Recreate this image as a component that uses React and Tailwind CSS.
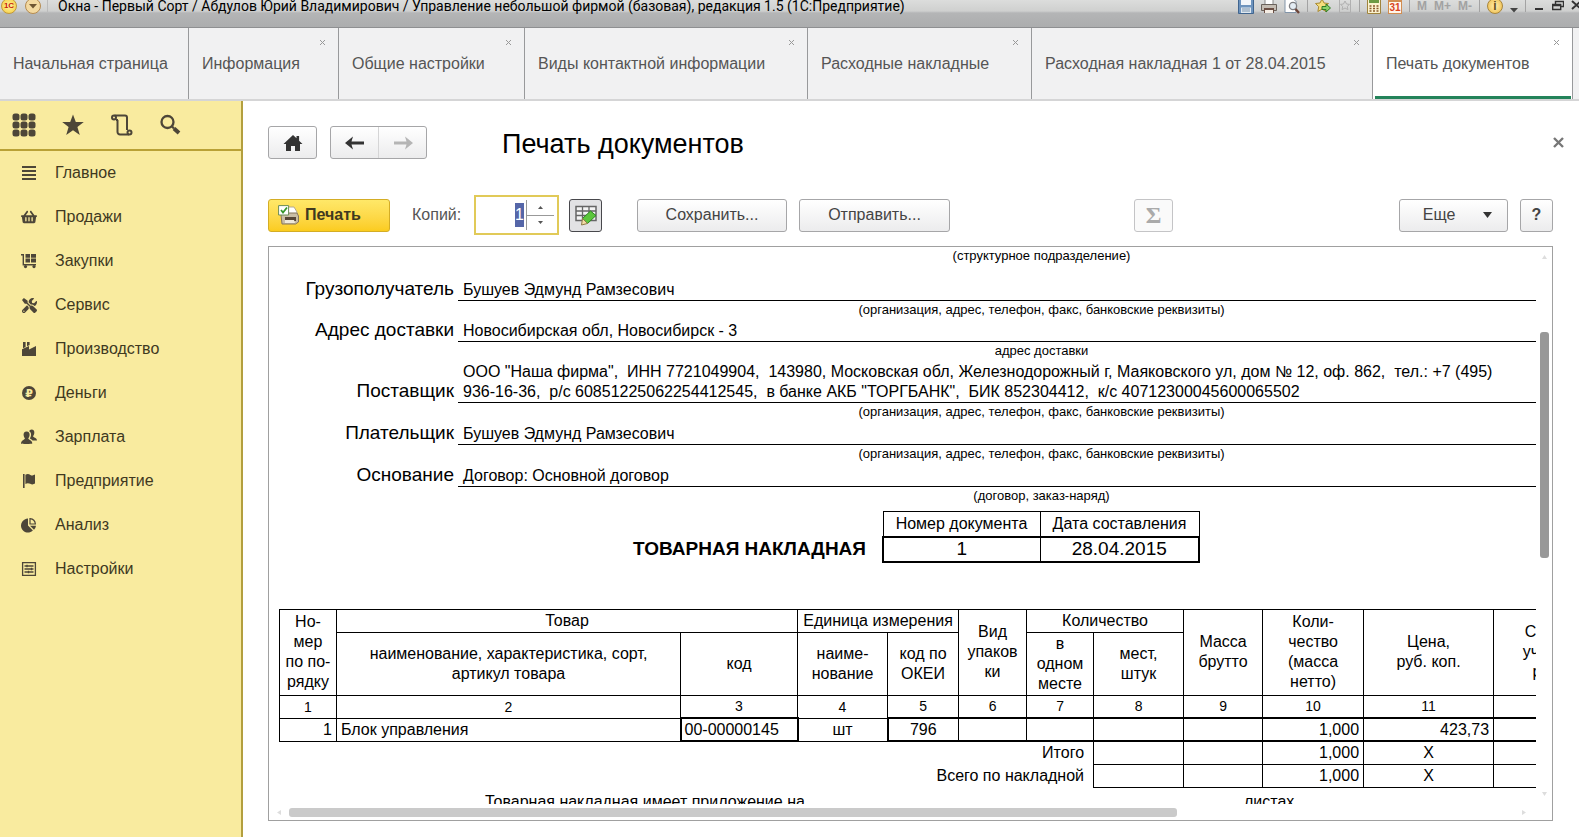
import React, { useEffect, useRef } from 'react';
import { FaShoppingBasket, FaTools } from 'react-icons/fa';

const tabs = [
  { title: 'Начальная страница', width: 'w-[189px]', fixed: true },
  { title: 'Информация', width: 'w-[150px]' },
  { title: 'Общие настройки', width: 'w-[186px]' },
  { title: 'Виды контактной информации', width: 'w-[283px]' },
  { title: 'Расходные накладные', width: 'w-[224px]' },
  { title: 'Расходная накладная 1 от 28.04.2015', width: 'w-[341px]' },
  { title: 'Печать документов', width: 'w-[200px]', active: true },
];

const CartIcon = () => (
  <svg className="w-4 h-4" viewBox="0 0 16 16" fill="currentColor">
    <path d="M0 1h3v10h12v1.5H1.6V2.4H0z" />
    <path d="M4.5 1h4.5v3.7H4.5zM10 1h5v3.7h-5zM4.5 5.6h4.5v4H4.5zM10 5.6h5v4h-5z" />
    <circle cx="4.5" cy="13.6" r="1.6" />
    <circle cx="13" cy="13.6" r="1.6" />
  </svg>
);

const FactoryIcon = () => (
  <svg className="w-4 h-4" viewBox="0 0 16 16" fill="currentColor">
    <path d="M1 15V8.2L8 5v3.6L15 5v10z" />
    <path d="M2 1h2.6v5L2 7.2zM6 1h2.6v3L6 5.2z" />
  </svg>
);

const ListIcon = () => (
  <svg className="w-4 h-4" viewBox="0 0 16 16" fill="currentColor">
    <path d="M1 1h14v2H1zM1 5h14v2H1zM1 9h14v2H1zM1 13h14v2H1z" />
  </svg>
);

const PeopleIcon = () => (
  <svg className="w-4 h-4" viewBox="0 0 16 16" fill="currentColor">
    <path d="M10.500.5c2.200 0 3 1.500 2.800 3.500-.1 1.500-.8 2.500-1.200 3.200 0 1.200 3.900 1.500 3.900 4.300h-4.500c-.8-1-2-1.600-2.700-2 1-1.400 1.700-3.500 1-5.400-.3-.8-.9-1.400-1.600-1.800.4-1.100 1.200-1.800 2.300-1.800z" />
    <path d="M5.600 2.500c2.200 0 3.200 1.500 3 3.600C8.500 7.700 7.800 8.700 7.300 9.400c0 1.300 4 1.700 4 5.100 0 .6-11.300.6-11.300 0 0-3.400 3.900-3.800 3.900-5.100-.5-.7-1.200-1.700-1.300-3.300-.2-2.100.8-3.600 3-3.600z" />
  </svg>
);

const FlagIcon = () => (
  <svg className="w-4 h-4" viewBox="0 0 16 16" fill="currentColor">
    <path d="M2 1h1.600v14H2z" />
    <path d="M4.400 1.800C6.500.6 8 1.200 9.400 1.900c1.600.8 3 .7 4.600-.3v9c-1.600 1-3.200 1-4.800.2-1.600-.7-3-.9-4.800.2z" />
  </svg>
);

const ChartIcon = () => (
  <svg className="w-4 h-4" viewBox="0 0 16 16" fill="currentColor">
    <path d="M7 1.600V8.600l4.900 5A7 7 0 1 1 7 1.600z" />
    <path d="M9 1.600A6 6 0 0 1 14.400 7H9z" fill="none" stroke="currentColor" strokeWidth="1.200" />
    <path d="M9 8.800h6a7 7 0 0 1-2 4z" />
  </svg>
);

const SettingsIcon = () => (
  <svg className="w-4 h-4" viewBox="0 0 16 16" fill="none" stroke="currentColor" strokeWidth="1.3">
    <path d="M1.6 1.6h12.8v12.8H1.6z" />
    <path d="M3.5 5h9M3.5 8h9M3.5 11h9M6 3.8v2.4M10.5 6.8v2.4M7.5 9.8v2.4" />
  </svg>
);

const RubleIcon = () => (
  <span className="flex h-[14px] w-[14px] items-center justify-center rounded-full bg-[#4d4638] text-[11px] leading-none font-bold text-[#f9eb9f] font-['DejaVu_Sans',sans-serif]">
    ₽
  </span>
);

const sections = [
  { title: 'Главное', icon: <ListIcon /> },
  { title: 'Продажи', icon: <FaShoppingBasket size={16} /> },
  { title: 'Закупки', icon: <CartIcon /> },
  { title: 'Сервис', icon: <FaTools size={15} /> },
  { title: 'Производство', icon: <FactoryIcon /> },
  { title: 'Деньги', icon: <RubleIcon /> },
  { title: 'Зарплата', icon: <PeopleIcon /> },
  { title: 'Предприятие', icon: <FlagIcon /> },
  { title: 'Анализ', icon: <ChartIcon /> },
  { title: 'Настройки', icon: <SettingsIcon /> },
];

const Separator = () => <span className="h-3 w-px shrink-0 bg-[#a3a3a3]" />;

const TitleBar = () => (
  <header className="h-7 shrink-0 overflow-hidden border-b border-[#8e8f91] bg-[linear-gradient(to_bottom,#dcdddc_0px,#cfd0cf_11px,#b4b5b6_13px,#acadae_27px)]">
    <div className="flex h-3 items-center">
      <button aria-label="Меню программы" className="ml-px flex h-4 w-4 shrink-0 items-center justify-center rounded-full border border-[#c29a3c] bg-[radial-gradient(#fff6a0,#f5c735)] text-[8px] font-bold leading-none text-[#c8200c]">
        1С
      </button>
      <button aria-label="Настройка панели" className="ml-2 flex h-4 w-4 shrink-0 items-center justify-center rounded-full border border-[#b58b50] bg-[#f3d9a0]">
        <svg className="h-2 w-2" viewBox="0 0 8 8" fill="#6f5632"><path d="M0 2h8L4 6.5z" /></svg>
      </button>
      <span className="ml-1.5 h-3 w-px bg-[#bbb]" />
      <h1 className="ml-2.5 whitespace-nowrap text-sm leading-3 text-black font-[Roboto,sans-serif]">
        Окна - Первый Сорт / Абдулов Юрий Владимирович / Управление небольшой фирмой (базовая), редакция 1.5 (1С:Предприятие)
      </h1>

      <div className="ml-auto flex shrink-0 items-center gap-[7px]">
        <button aria-label="Сохранить">
          <svg className="h-4 w-4" viewBox="0 0 16 16">
            <path d="M.5.5h15v15H.5z" fill="#6d93bd" stroke="#40658f" />
            <path d="M3 1h10v6H3z" fill="#f2f6fa" />
            <path d="M3 9.500h10V15H3z" fill="#dfe8f0" />
            <path d="M4 11h8M4 13h8" stroke="#7c95ae" />
          </svg>
        </button>
        <button aria-label="Печать">
          <svg className="h-4 w-4" viewBox="0 0 16 16">
            <path d="M4 1h8v6H4z" fill="#fff" stroke="#888" />
            <path d="M.5 6.500h15v6H.5z" fill="#c5bdb3" stroke="#6a625b" />
            <path d="M3 10h10v5H3z" fill="#6b4e43" />
            <path d="M4 12h8v3H4z" fill="#f5ede4" />
          </svg>
        </button>
        <button aria-label="Предварительный просмотр">
          <svg className="h-4 w-4" viewBox="0 0 16 16" fill="none">
            <path d="M1 .5h8l3 3v11H1z" fill="#fff" stroke="#8194a8" />
            <circle cx="9" cy="8" r="3.600" fill="#e4edf4" stroke="#7e7f83" strokeWidth="1.300" />
            <path d="M11.500 11l3.500 4" stroke="#6d4438" strokeWidth="2.400" />
          </svg>
        </button>
        <Separator />
        <button aria-label="Добавить в избранное">
          <svg className="h-4 w-4" viewBox="0 0 16 16">
            <path d="M7 1l2 4 4.500.5-3.200 3.200.8 4.800L7 11.200 2.900 13.500l.8-4.800L.5 5.500 5 5z" fill="#f5dd7b" stroke="#a98a32" />
            <path d="M7 8.500h4V6l4.500 4-4.500 4v-2.500H7z" fill="#8bd16a" stroke="#2f7c25" />
          </svg>
        </button>
        <button aria-label="Избранное" disabled>
          <svg className="h-4 w-[14px]" viewBox="1 0 14 16" fill="none" stroke="#b0b0b0">
            <path d="M2.500.5h11v14h-11z" />
            <path d="M8 3l1.500 3 3 .4-2.200 2 .6 3.200L8 10l-2.900 1.600.6-3.200-2.200-2 3-.4z" />
          </svg>
        </button>
        <Separator />
        <button aria-label="Калькулятор">
          <svg className="h-4 w-[14px]" viewBox="0 0 14 16">
            <path d="M.5.5h13v15H.5z" fill="#fbf3cf" stroke="#a0843d" />
            <path d="M2 2h10v3H2z" fill="#6d9b45" />
            <path d="M2.500 8h9M2.500 10.500h9M2.500 13h9" stroke="#8a5a2c" strokeWidth="1.500" strokeDasharray="2 1.500" />
          </svg>
        </button>
        <button aria-label="Календарь" className="flex h-4 w-[14px] items-end justify-center border border-[#d28d51] border-t-4 bg-[#fff6ea] text-[10px] font-bold leading-[11px] text-[#d9431e]">
          31
        </button>
        <Separator />
        <button disabled className="text-xs font-bold leading-3 text-[#a2a2a2]">M</button>
        <button disabled className="text-xs font-bold leading-3 text-[#a2a2a2]">M+</button>
        <button disabled className="text-xs font-bold leading-3 text-[#a2a2a2]">M-</button>
        <Separator />
        <button aria-label="О программе" className="flex h-4 w-4 items-center justify-center rounded-full border border-[#a9863c] bg-[radial-gradient(#ffeeb0,#edb942)] text-xs font-bold leading-none text-[#604b1c]">
          i
        </button>
        <button aria-label="Ещё">
          <svg className="h-[5px] w-2 mt-2" viewBox="0 0 8 5" fill="#444"><path d="M0 0h8L4 4.500z" /></svg>
        </button>
        <Separator />
        <button aria-label="Свернуть">
          <svg className="h-4 w-3" viewBox="0 0 12 16" fill="#333"><path d="M2 10h8v2H2z" /></svg>
        </button>
        <button aria-label="Восстановить">
          <svg className="h-4 w-3" viewBox="0 0 12 16" fill="none" stroke="#333" strokeWidth="1.400">
            <path d="M3.500 6V3.500h8v5H9M.7 6.500h8v5h-8zM.7 7.500h8" />
          </svg>
        </button>
        <button aria-label="Закрыть" className="w-[8px] overflow-hidden">
          <svg className="h-4 w-3" viewBox="0 0 12 16" fill="none" stroke="#333" strokeWidth="2">
            <path d="M1 3l9 8M10 3l-9 8" />
          </svg>
        </button>
      </div>
    </div>
  </header>
);

const TabBar = () => (
  <nav className="flex h-[73px] shrink-0 border-b-2 border-[#d5d5d6] bg-[#f1f1f2]">
    {tabs.map((tab) => (
      <div
        key={tab.title}
        className={`relative flex shrink-0 border-r border-[#98999b] ${tab.width} ${tab.active ? 'bg-white' : ''}`}
      >
        <button className="flex-1 whitespace-nowrap pl-[13px] text-left text-base text-[#555]">{tab.title}</button>
        {!tab.fixed && (
          <button aria-label="Закрыть вкладку" className="absolute right-[13px] top-3 text-[#999]">
            <svg className="h-[5px] w-[5px]" viewBox="0 0 5 5" stroke="currentColor"><path d="M0 0l5 5M5 0L0 5" /></svg>
          </button>
        )}
        {tab.active && <span className="absolute left-0.5 right-px bottom-0 h-[3px] bg-[#24835a]" />}
      </div>
    ))}
  </nav>
);

const Sidebar = () => (
  <aside className="w-[243px] shrink-0 border-r-2 border-[#b39f3e] bg-[#f9eb9f] text-[#4d4638]">
    <div className="flex h-[50px] items-center border-b-2 border-[#b9a136] pl-3">
      <button aria-label="Все разделы">
        <svg className="h-6 w-6" viewBox="0 0 24 24" fill="currentColor">
          {[4, 12, 20].map((y) => [4, 12, 20].map((x) => (
            <rect key={`${x}-${y}`} x={x - 3.5} y={y - 3.5} width="7" height="7" rx="2.5" />
          )))}
        </svg>
      </button>
      <button aria-label="Избранное" className="ml-[25px]">
        <svg className="h-6 w-6" viewBox="0 0 24 24" fill="currentColor">
          <path d="M12 1.500l2.800 7.500h8l-6.400 5 2.400 8L12 17.300 5.200 22l2.400-8-6.400-5h8z" />
        </svg>
      </button>
      <button aria-label="История" className="ml-[25px]">
        <svg className="h-6 w-6" viewBox="0 0 24 24" fill="none" stroke="currentColor" strokeWidth="2">
          <path d="M4.500 2.500H15a2 2 0 0 1 2 2v12.500M7.500 7v12a2.500 2.500 0 0 0 2.500 2.500h9" />
          <circle cx="4" cy="4.500" r="2" />
          <path d="M6 7h2" />
          <circle cx="19.500" cy="19.500" r="2" />
        </svg>
      </button>
      <button aria-label="Поиск" className="ml-6">
        <svg className="h-6 w-6" viewBox="0 0 24 24" fill="none" stroke="currentColor">
          <circle cx="9.500" cy="9" r="6" strokeWidth="2.300" />
          <path d="M14 13.500l2 2" strokeWidth="2.300" />
          <path d="M16 15.500l5 4.500" strokeWidth="4" />
        </svg>
      </button>
    </div>
    <ul>
      {sections.map((section) => (
        <li key={section.title}>
          <a href="#" className="flex h-11 items-center pl-[21px] text-base text-[#40391f]">
            <span className="flex w-4 justify-center text-[#4d4638]">{section.icon}</span>
            <span className="ml-[18px]">{section.title}</span>
          </a>
        </li>
      ))}
    </ul>
  </aside>
);

const buttonStyle = 'flex h-[33px] items-center justify-center rounded-[3px] border border-[#a6a6a8] bg-linear-to-b from-white to-[#ececed] text-base text-[#444]';

const Toolbar = () => {
  const copies = useRef(null);

  useEffect(() => {
    copies.current.focus();
    copies.current.select();
  }, []);

  return (
    <div className="mt-9 flex h-10 items-center">
      <button className="flex h-[33px] w-[122px] shrink-0 items-center gap-1.5 rounded-[3px] border border-[#d4ad25] bg-linear-to-b from-[#ffe868] to-[#fbcc1d] pl-[9px] text-base font-bold text-[#40391f]">
        <svg className="h-5 w-[21px]" viewBox="0 0 21 20">
          <path d="M7 2h9l3 5v3H7z" fill="#fff" stroke="#b4a98c" />
          <path d="M3 10l3-2h13l1.500 3v6l-3 2H4z" fill="#c9bda5" stroke="#85765d" />
          <path d="M7 12h11v4H7z" fill="#564636" />
          <path d="M7 15h9l1 3H7z" fill="#efe9da" />
          <path d="M.6.600h10v9.400H.6z" fill="#fff" stroke="#6a8c56" />
          <path d="M3 5l2 2.500L9 2.500" fill="none" stroke="#35962b" strokeWidth="1.800" />
        </svg>
        Печать
      </button>
      <label htmlFor="copies" className="ml-[22px] w-[62px] text-base text-[#555]">Копий:</label>
      <div className="flex h-10 w-[85px] shrink-0 border-2 border-[#e1ca58] bg-white py-[3px] pr-[3px]">
        <input
          id="copies"
          ref={copies}
          defaultValue="1"
          className="w-[51px] border-r border-[#999] pr-[2px] text-right text-base text-black outline-none selection:bg-[#5566a8] selection:text-white"
        />
        <div className="flex flex-1 flex-col">
          <button aria-label="Больше" className="flex flex-1 items-center justify-center border-b border-[#999]">
            <svg className="h-[3px] w-[5px]" viewBox="0 0 5 3" fill="#555"><path d="M0 3h5L2.500 0z" /></svg>
          </button>
          <button aria-label="Меньше" className="flex flex-1 items-center justify-center">
            <svg className="h-[3px] w-[5px]" viewBox="0 0 5 3" fill="#555"><path d="M0 0h5L2.500 3z" /></svg>
          </button>
        </div>
      </div>
      <button aria-label="Редактирование" className="ml-2.5 flex h-[33px] w-[33px] shrink-0 items-center justify-center rounded-[3px] border border-[#48484c] bg-[#e2e2e4]">
        <svg className="h-[21px] w-[22px]" viewBox="0 0 22 21">
          <path d="M1 1.500h20v14H1z" fill="#f4f4f4" stroke="#666" strokeWidth="1.500" />
          <path d="M1 6h20M1 10.500h20M7.500 1.500v14M14 1.500v14" stroke="#666" strokeWidth="1.300" />
          <path d="M7.500 13.500l8-7.500 5.500 4.500-8.500 8z" fill="#5cc63c" stroke="#2c8420" />
          <path d="M7.500 13.500l-1 6.500 6-1.500z" fill="#f2dca5" stroke="#8f7b49" />
        </svg>
      </button>
      <button className={`${buttonStyle} ml-[35px] w-[150px]`}>Сохранить...</button>
      <button className={`${buttonStyle} ml-3 w-[151px]`}>Отправить...</button>
      <button aria-label="Сумма" disabled className="ml-[184px] flex h-[33px] w-[39px] items-center justify-center rounded-[3px] border border-[#c4c4c6] bg-[#fafafa] text-2xl font-bold leading-none text-[#aaa] font-['Liberation_Serif',serif]">
        Σ
      </button>
      <button className={`${buttonStyle} ml-auto w-[109px] gap-7 pl-2`}>
        Еще
        <svg className="h-[6px] w-[9px]" viewBox="0 0 9 6" fill="#333"><path d="M0 0h9L4.500 6z" /></svg>
      </button>
      <button aria-label="Справка" className={`${buttonStyle} ml-3 w-[33px] font-bold`}>?</button>
    </div>
  );
};

const Field = ({ label, children, height = 'h-[25px]' }) => (
  <div className={`flex items-end ${height}`}>
    <div className="w-[179px] shrink-0 whitespace-nowrap pr-1 pb-px text-right text-[19px] leading-[22px]">{label}</div>
    <div className="flex-1 self-stretch border-b border-black flex items-end pl-[5px] text-base leading-5">
      <div className="whitespace-pre">{children}</div>
    </div>
  </div>
);

const Caption = ({ children }) => (
  <div className="ml-[179px] h-[17px] text-center text-[13px] leading-[17px]">{children}</div>
);

const cell = 'border border-black p-0 font-normal';
const strong = 'border-2 border-black p-0';
const requisites = '(организация, адрес, телефон, факс, банковские реквизиты)';

const GoodsTable = () => (
  <table className="mt-[46px] w-[1357px] table-fixed border-collapse text-center text-base leading-5">
    <colgroup>
      <col className="w-[57px]" />
      <col className="w-[344px]" />
      <col className="w-[117px]" />
      <col className="w-[90px]" />
      <col className="w-[71px]" />
      <col className="w-[68px]" />
      <col className="w-[67px]" />
      <col className="w-[90px]" />
      <col className="w-[79px]" />
      <col className="w-[101px]" />
      <col className="w-[130px]" />
      <col />
    </colgroup>
    <thead>
      <tr className="h-[23px]">
        <th rowSpan={2} className={cell}>Но-<br />мер<br />по по-<br />рядку</th>
        <th colSpan={2} className={cell}>Товар</th>
        <th colSpan={2} className={`${cell} whitespace-nowrap`}>Единица измерения</th>
        <th rowSpan={2} className={cell}>Вид<br />упаков<br />ки</th>
        <th colSpan={2} className={cell}>Количество</th>
        <th rowSpan={2} className={cell}>Масса<br />брутто</th>
        <th rowSpan={2} className={cell}>Коли-<br />чество<br />(масса<br />нетто)</th>
        <th rowSpan={2} className={cell}>Цена,<br />руб. коп.</th>
        <th rowSpan={2} className={cell}>Сумма без<br />учета НДС,<br />руб. коп.</th>
      </tr>
      <tr className="h-[63px]">
        <th className={cell}>наименование, характеристика, сорт,<br />артикул товара</th>
        <th className={cell}>код</th>
        <th className={cell}>наиме-<br />нование</th>
        <th className={cell}>код по<br />ОКЕИ</th>
        <th className={cell}>в<br />одном<br />месте</th>
        <th className={cell}>мест,<br />штук</th>
      </tr>
      <tr className="h-[23px] text-sm">
        {[1, 2, 3, 4, 5, 6, 7, 8, 9, 10, 11, 12].map((n) => (
          <th key={n} className={cell}>{n}</th>
        ))}
      </tr>
    </thead>
    <tbody>
      <tr className="h-[23px]">
        <td className={`${cell} pr-1 text-right`}>1</td>
        <td className={`${cell} pl-1 text-left`}>Блок управления</td>
        <td className={`${strong} pl-[3px] text-left`}>00-00000145</td>
        <td className={cell}>шт</td>
        <td className={`${strong} border-r`}>796</td>
        <td className={`${strong} border-x`}></td>
        <td className={`${strong} border-x`}></td>
        <td className={`${strong} border-x`}></td>
        <td className={`${strong} border-x`}></td>
        <td className={`${strong} border-x pr-1 text-right`}>1,000</td>
        <td className={`${strong} border-x pr-1 text-right`}>423,73</td>
        <td className={`${strong} border-x`}></td>
      </tr>
      {['Итого', 'Всего по накладной'].map((total) => (
        <tr key={total} className="h-[23px]">
          <td colSpan={7} className="p-0 pr-[9px] text-right">{total}</td>
          <td className={cell}></td>
          <td className={cell}></td>
          <td className={`${cell} pr-1 text-right`}>1,000</td>
          <td className={cell}>Х</td>
          <td className={cell}></td>
        </tr>
      ))}
    </tbody>
  </table>
);

const Sheet = () => (
  <div className="w-[1356px] pl-2.5 text-black">
    <Caption>(структурное подразделение)</Caption>
    <Field label="Грузополучатель" height="h-[37px]">Бушуев Эдмунд Рамзесович</Field>
    <Caption>{requisites}</Caption>
    <Field label="Адрес доставки" height="h-6">Новосибирская обл, Новосибирск - 3</Field>
    <Caption>адрес доставки</Caption>
    <Field label="Поставщик" height="h-11">
      {'ООО "Наша фирма",  ИНН 7721049904,  143980, Московская обл, Железнодорожный г, Маяковского ул, дом № 12, оф. 862,  тел.: +7 (495)\n936-16-36,  р/с 60851225062254412545,  в банке АКБ "ТОРГБАНК",  БИК 852304412,  к/с 40712300045600065502'}
    </Field>
    <Caption>{requisites}</Caption>
    <Field label="Плательщик">Бушуев Эдмунд Рамзесович</Field>
    <Caption>{requisites}</Caption>
    <Field label="Основание">Договор: Основной договор</Field>
    <Caption>(договор, заказ-наряд)</Caption>

    <div className="mt-[7px] flex items-end">
      <h3 className="w-[603px] pr-4 pb-[2px] text-right text-[19px] font-bold leading-6">ТОВАРНАЯ НАКЛАДНАЯ</h3>
      <table className="w-[318px] table-fixed border-collapse text-center text-base leading-5">
        <thead>
          <tr className="h-[25px]">
            <th className={`${cell} w-[157px]`}>Номер документа</th>
            <th className={cell}>Дата составления</th>
          </tr>
        </thead>
        <tbody>
          <tr className="h-[25px] text-[19px]">
            <td className={`${strong} border-r`}>1</td>
            <td className={`${strong} border-l`}>28.04.2015</td>
          </tr>
        </tbody>
      </table>
    </div>

    <GoodsTable />

    <div className="mt-1 flex pl-[206px] text-base leading-5">
      <p className="w-[759px]">Товарная накладная имеет приложение на</p>
      <p>листах</p>
    </div>
  </div>
);

const DocumentView = () => (
  <section className="mt-[11px] flex min-h-0 flex-1 flex-col border border-[#a0a0a0] bg-white">
    <div className="flex min-h-0 flex-1">
      <div className="min-w-0 flex-1 overflow-hidden">
        <Sheet />
      </div>
      <div className="flex w-4 flex-col items-center py-2">
        <svg className="h-1 w-[5px]" viewBox="0 0 5 4" fill="#ddd"><path d="M0 4h5L2.500 0z" /></svg>
        <div className="flex w-[9px] flex-1 flex-col">
          <div className="flex-[73]" />
          <div className="flex-[226] rounded-[3px] bg-[#989898]" />
          <div className="flex-[234]" />
        </div>
        <svg className="h-1 w-[5px]" viewBox="0 0 5 4" fill="#ddd"><path d="M0 0h5L2.500 4z" /></svg>
      </div>
    </div>
    <div className="flex h-4 items-center pl-2 pr-[26px]">
      <svg className="h-[5px] w-1" viewBox="0 0 4 5" fill="#ddd"><path d="M4 0v5L0 2.500z" /></svg>
      <div className="flex h-[9px] flex-1 pl-2">
        <div className="flex-[889] rounded-[3px] bg-[#cacaca]" />
        <div className="flex-[345]" />
      </div>
      <svg className="h-[5px] w-1" viewBox="0 0 4 5" fill="#ddd"><path d="M0 0v5l4-2.500z" /></svg>
    </div>
  </section>
);

const App = () => {
  return (
    <div className="flex h-screen flex-col overflow-hidden bg-white font-['Liberation_Sans',Arial,sans-serif]">
      <TitleBar />
      <TabBar />
      <div className="flex min-h-0 flex-1">
        <Sidebar />
        <main className="flex min-w-0 flex-1 flex-col pl-[25px] pr-[26px] pt-[25px] pb-4">
          <div className="flex h-[33px] items-center">
            <button aria-label="Домой" className={`${buttonStyle} w-[49px]`}>
              <svg className="h-[18px] w-5" viewBox="0 0 20 18" fill="#333">
                <path d="M10 1l3.500 3.200V2h2.600v4.700L19.500 10H17v7h-5v-5H8v5H3v-7H.5z" />
              </svg>
            </button>
            <div className="ml-[13px] flex h-[33px] w-[97px] rounded-[3px] border border-[#a6a6a8] bg-linear-to-b from-white to-[#ececed]">
              <button aria-label="Назад" className="flex flex-1 items-center justify-center border-r border-[#d5d5d6]">
                <svg className="h-[14px] w-5" viewBox="0 0 20 14" fill="#333"><path d="M0 7l8-6.500-1.500 5H19v3H6.500l1.500 5z" /></svg>
              </button>
              <button aria-label="Вперед" disabled className="flex flex-1 items-center justify-center">
                <svg className="h-[14px] w-5" viewBox="0 0 20 14" fill="#b5b5b5"><path d="M20 7l-8-6.500 1.500 5H1v3h12.500l-1.500 5z" /></svg>
              </button>
            </div>
            <h2 className="ml-[75px] pt-[3px] text-[27px] leading-8 text-black">Печать документов</h2>
            <button aria-label="Закрыть" className="ml-auto -mr-[11px]">
              <svg className="h-[11px] w-[11px]" viewBox="0 0 11 11" stroke="#777" strokeWidth="2.400"><path d="M1 1l9 9M10 1l-9 9" /></svg>
            </button>
          </div>
          <Toolbar />
          <DocumentView />
        </main>
      </div>
    </div>
  );
};

export default App;
